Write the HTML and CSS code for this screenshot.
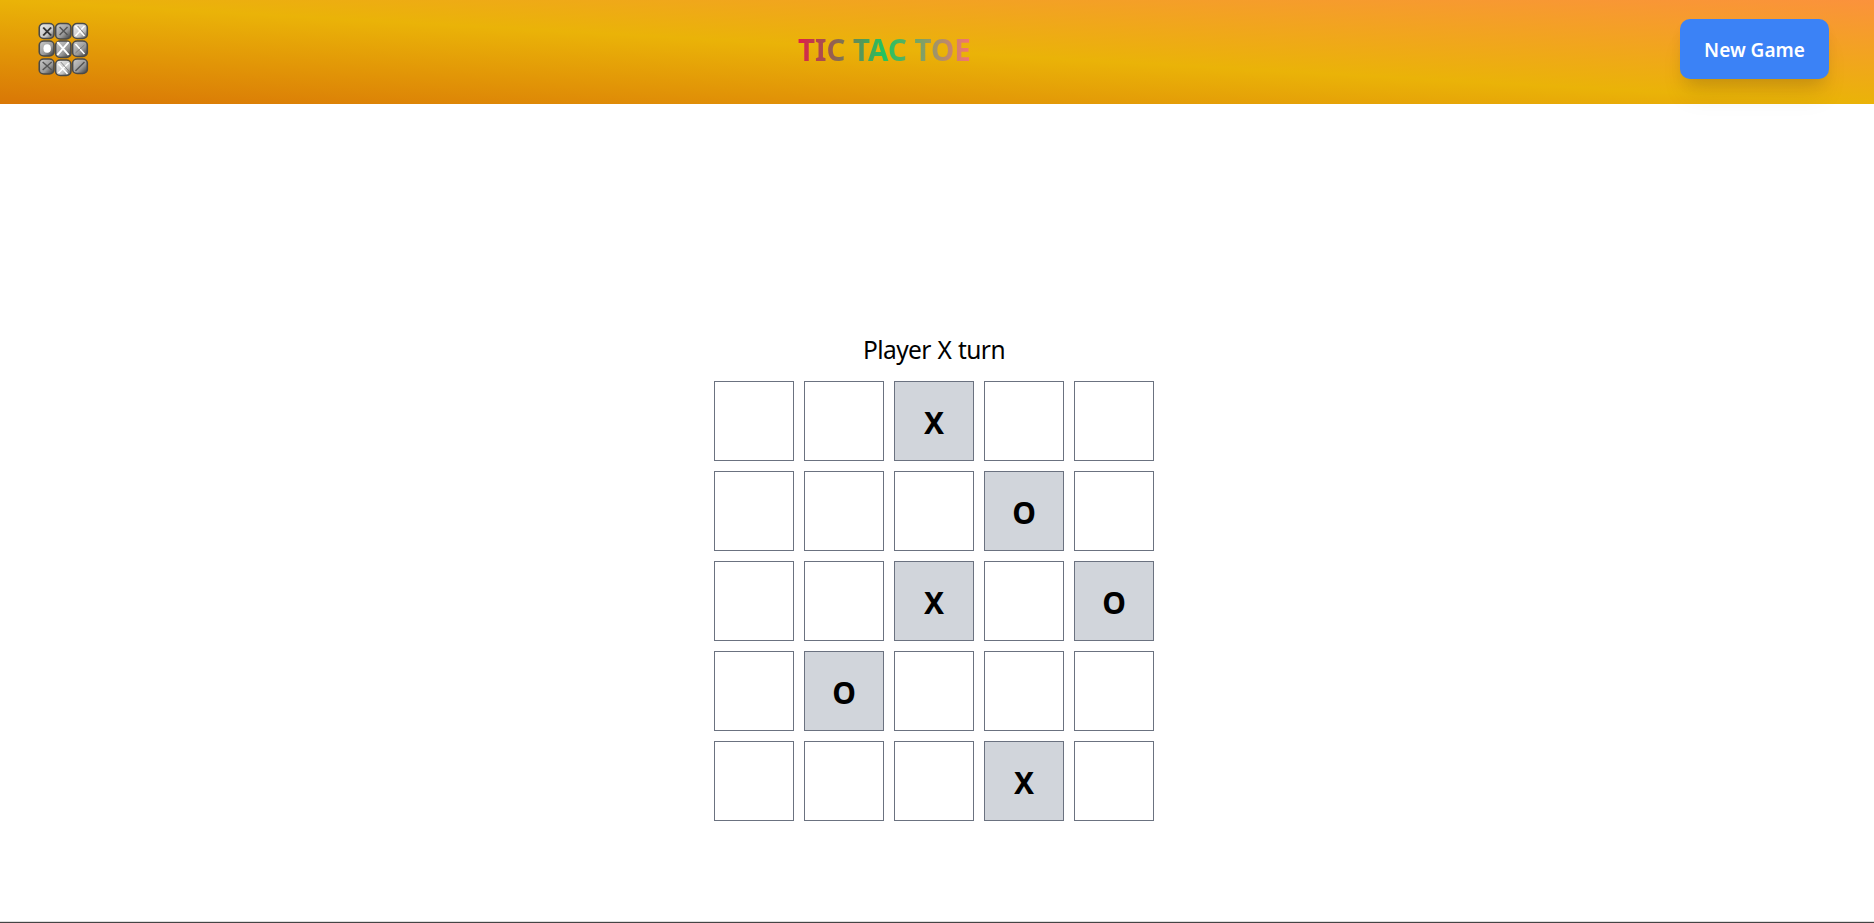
FILE: index.html
```html
<!DOCTYPE html>
<html lang="en">
<head>
<meta charset="utf-8">
<title>Tic Tac Toe</title>
<link rel="stylesheet" href="styles.css">
</head>
<body>
<header class="navbar">
  <svg class="logo" viewBox="0 0 46 56" preserveAspectRatio="none" aria-hidden="true">
    <defs>
      <linearGradient id="light" x1="0" y1="0" x2="1" y2="1"><stop offset="0" stop-color="#eee"/><stop offset=".65" stop-color="#c4c4c4"/><stop offset="1" stop-color="#444"/></linearGradient>
      <linearGradient id="mid" x1="0" y1="0" x2="1" y2="1"><stop offset="0" stop-color="#ccc"/><stop offset=".6" stop-color="#999"/><stop offset="1" stop-color="#333"/></linearGradient>
    </defs>
    <g stroke="#4a4a48" stroke-width="1.4">
      <rect x="2" y="1.500" width="13" height="15" rx="4" fill="url(#light)"/>
      <rect x="16.500" y="1.500" width="13.500" height="15.500" rx="4" fill="url(#mid)"/>
      <rect x="31.500" y="1.500" width="13" height="15" rx="4" fill="url(#light)"/>
      <rect x="2" y="19" width="13" height="15" rx="4" fill="url(#mid)"/>
      <rect x="16.500" y="19" width="13.500" height="16.500" rx="4" fill="url(#mid)"/>
      <rect x="31.500" y="19" width="13" height="15.500" rx="4" fill="url(#mid)"/>
      <rect x="2" y="37" width="13" height="15" rx="4" fill="url(#mid)"/>
      <rect x="16.500" y="38" width="13.500" height="15.500" rx="4" fill="url(#light)"/>
      <rect x="31.500" y="37" width="13" height="14.500" rx="4" fill="url(#mid)"/>
    </g>
    <path d="M5.500 5.500l7 8M12.500 5.500l-7 8" stroke="#333" stroke-width="1.8"/>
    <path d="M20 5l7 8M27 5l-7 8M5 40l8 8M13 40l-8 8M42 40l-8 9" stroke="#555" stroke-width="1.2"/>
    <path d="M34 4l8 10M42 4l-8 10M19 42l8 10M28 41l-9 10M34 22l8 10" stroke="#fff" stroke-width="1.3"/>
    <path d="M36 4l7 9M21 40l8 10M42 23l-8 8" stroke="#777" stroke-width=".8"/>
    <path d="M18 20l10 13M28 20l-10 13" stroke="#fff" stroke-width="1.8"/>
    <ellipse cx="9" cy="26.500" rx="3.300" ry="4.300" fill="#fff"/>
  </svg>
  <h1 class="title">TIC TAC TOE</h1>
  <button class="new-game">New Game</button>
</header>
<main class="game">
  <p class="status">Player X turn</p>
  <div class="board">
    <div class="cell"></div><div class="cell"></div><div class="cell taken">X</div><div class="cell"></div><div class="cell"></div>
    <div class="cell"></div><div class="cell"></div><div class="cell"></div><div class="cell taken">O</div><div class="cell"></div>
    <div class="cell"></div><div class="cell"></div><div class="cell taken">X</div><div class="cell"></div><div class="cell taken">O</div>
    <div class="cell"></div><div class="cell taken">O</div><div class="cell"></div><div class="cell"></div><div class="cell"></div>
    <div class="cell"></div><div class="cell"></div><div class="cell"></div><div class="cell taken">X</div><div class="cell"></div>
  </div>
</main>
<footer class="bottom-edge"></footer>
</body>
</html>
```
FILE: styles.css
```css
* { box-sizing: border-box; margin: 0; }
body {
  height: 100vh;
  display: flex;
  flex-direction: column;
  overflow: hidden;
  background: #fff;
  color: #000;
  font-family: "Noto Sans", "Open Sans", sans-serif;
}
.navbar {
  height: 104px;
  flex: none;
  display: flex;
  justify-content: space-between;
  align-items: flex-start;
  padding: 19px 45px 0 37px;
  background: linear-gradient(to top right, #d97706, #eab308, #fb923c);
}
.logo { width: 52px; height: 56px; margin-top: 3px; }
.title {
  width: 173px;
  margin-top: 11px;
  font-size: 29.5px;
  line-height: 40px;
  font-weight: 700;
  white-space: nowrap;
  background: linear-gradient(to right, #e11d48, #22c55e, #f87171);
  -webkit-background-clip: text;
  background-clip: text;
  color: transparent;
}
.new-game {
  width: 149px;
  height: 60px;
  padding: 2px 0 0;
  border: 0;
  border-radius: 10px;
  background: #3b82f6;
  color: #fff;
  font: 600 19px/28px "Noto Sans", sans-serif;
  box-shadow: 0 21px 26px -5px rgba(0,0,0,.08), 0 8px 15px -5px rgba(0,0,0,.12);
}
.game {
  flex: 1;
  display: flex;
  flex-direction: column;
  align-items: center;
  padding: 228px 6px 0 0;
}
.status { height: 49px; font-size: 24.5px; line-height: 36px; letter-spacing: -.6px; word-spacing: 1px; }
.board { display: grid; grid-template-columns: repeat(5, 80px); grid-auto-rows: 80px; gap: 10px; }
.cell {
  display: flex;
  align-items: center;
  justify-content: center;
  padding-top: 2px;
  border: 1px solid #6b7280;
  font-size: 30px;
  font-weight: 700;
}
.taken { background: #d1d5db; }
.bottom-edge { height: 2px; flex: none; background: #444; border-top: 1px solid #ddd; }
```
